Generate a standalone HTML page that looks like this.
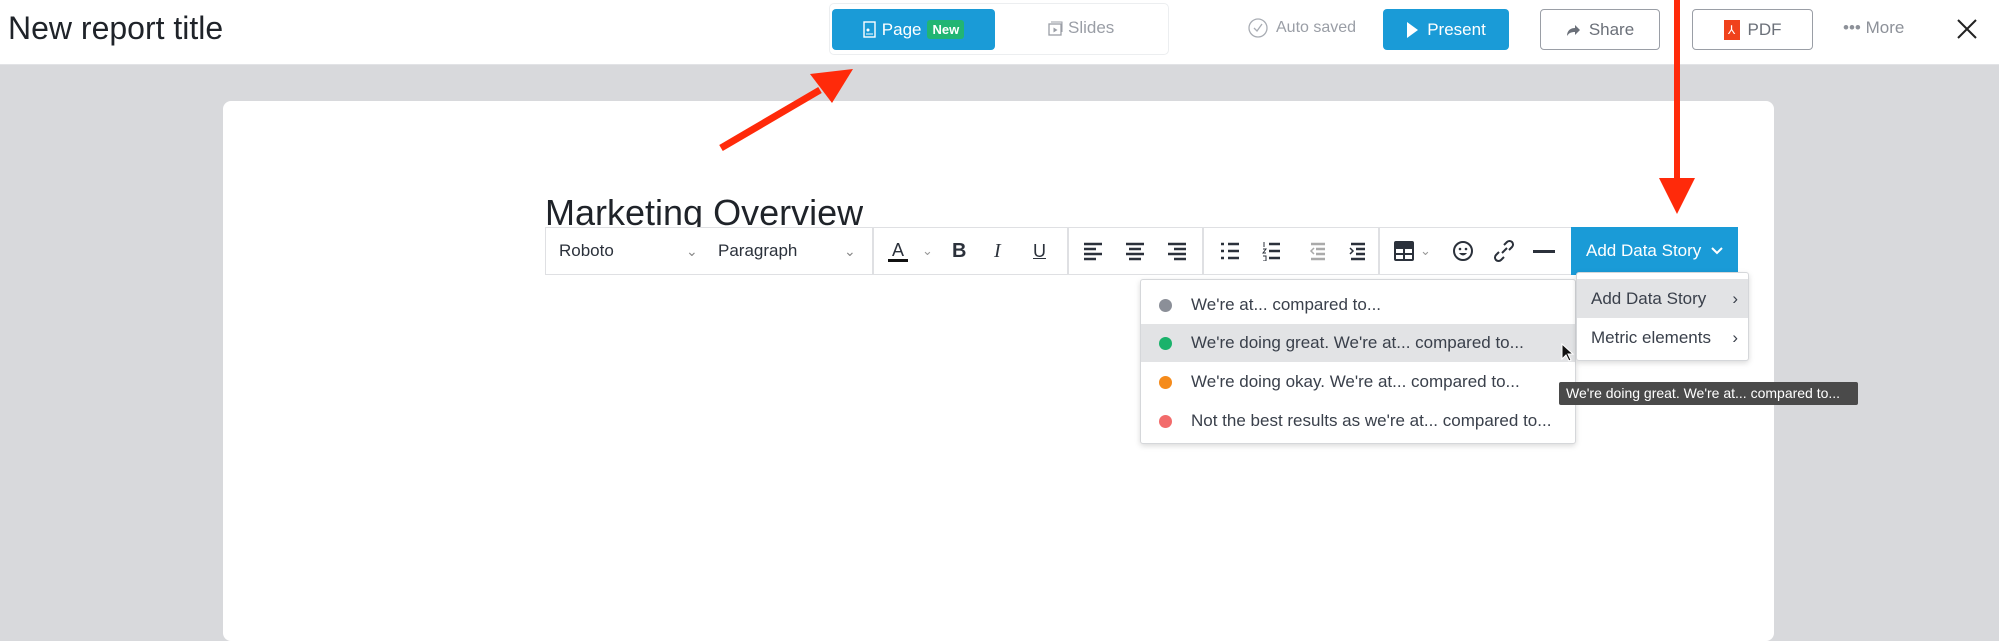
<!DOCTYPE html>
<html><head><meta charset="utf-8"><style>
*{margin:0;padding:0;box-sizing:border-box}
body{width:1999px;height:616px;overflow:hidden;background:#d8d9dc;font-family:"Liberation Sans",sans-serif;position:relative;color:#2b313b}
.a{position:absolute}
.hdr{left:0;top:0;width:1999px;height:65px;background:#fff;border-bottom:1px solid #e2e3e6}
.btn{position:absolute;top:9px;height:41px;border-radius:4px;font-size:17px;display:flex;align-items:center;justify-content:center;gap:8px}
.out{border:1.5px solid #9a9ea6;color:#6b7079;background:#fff}
.card{left:223px;top:101px;width:1551px;height:540px;background:#fff;border-radius:8px}
.tb{left:545px;top:227px;width:1193px;height:48px;border:1.5px solid #dfe0e3;background:#fff}
.dv{position:absolute;top:0;width:1.5px;height:46px;background:#dfe0e3}
.ic{position:absolute;top:0;height:46px;display:flex;align-items:center;justify-content:center;font-size:20px;color:#2b313b}
.menu{background:#fff;border:1px solid #d5d7da;border-radius:3px;box-shadow:0 2px 6px rgba(0,0,0,.15)}
.row{position:absolute;left:0;right:0;height:38px;display:flex;align-items:center;font-size:17px;color:#3a404b}
.dot{width:13px;height:13px;border-radius:50%;margin-left:18px;margin-right:19px}
</style></head><body>
<div class="a hdr"></div>
<div class="a" style="left:8px;top:10px;font-size:32px;color:#1f2329">New report title</div>
<div class="a" style="left:829px;top:3px;width:340px;height:52px;border:1px solid #eceef0;border-radius:5px;background:#fff"></div>
<div class="btn" style="left:832px;width:163px;background:#1a9bd7;color:#fff;gap:6px">
<svg width="13" height="17" viewBox="0 0 13 17"><rect x="1" y="1" width="11" height="15" fill="none" stroke="#fff" stroke-width="1.4"/><circle cx="5" cy="9" r="1.5" fill="#fff"/><path d="M3 13h7" stroke="#fff"/></svg>
<span>Page</span><span style="background:#22b573;font-size:13px;font-weight:bold;padding:2px 5px;border-radius:3px">New</span></div>
<div class="a" style="left:1048px;top:18px;font-size:17px;color:#9a9ea6;display:flex;gap:5px;align-items:center"><svg width="15" height="15" viewBox="0 0 15 15"><rect x="1" y="3" width="12" height="11" fill="none" stroke="#9a9ea6" stroke-width="1.3"/><path d="M3 1h11v10" fill="none" stroke="#9a9ea6"/><path d="M5.5 6.5v5l4-2.5z" fill="#9a9ea6"/></svg>Slides</div>
<div class="a" style="left:1248px;top:18px;font-size:16px;color:#9a9ea6;display:flex;gap:8px;align-items:center"><svg width="20" height="20" viewBox="0 0 20 20"><circle cx="10" cy="10" r="9" fill="none" stroke="#a9adb4" stroke-width="1.3"/><path d="M6 10l3 3 5-7" fill="none" stroke="#a9adb4" stroke-width="1.3"/></svg>Auto saved</div>
<div class="btn" style="left:1383px;width:126px;background:#1a9bd7;color:#fff"><svg width="13" height="18" viewBox="0 0 13 18"><path d="M1 1l11 8-11 8z" fill="#fff"/></svg>Present</div>
<div class="btn out" style="left:1540px;width:120px"><svg width="15" height="15" viewBox="0 0 15 15"><path d="M1 14c0-6 4-8 8-8V3l5 5-5 5V10c-4 0-6 1-8 4z" fill="#6b7079"/></svg>Share</div>
<div class="btn out" style="left:1692px;width:121px"><span style="display:inline-block;width:16px;height:20px;background:#f0421c;color:#fff;font-size:12px;text-align:center;line-height:20px">⅄</span>PDF</div>
<div class="a" style="left:1843px;top:18px;font-size:17px;color:#8d9199">••• More</div>
<svg class="a" style="left:1956px;top:18px" width="22" height="22" viewBox="0 0 22 22"><path d="M2 2l18 18M20 2L2 20" stroke="#222" stroke-width="2"/></svg>
<div class="a card"></div>
<div class="a" style="left:545px;top:192px;font-size:36px;color:#1f2329;height:35px;overflow:hidden;line-height:42px">Marketing Overview</div>
<div class="a tb">
<div class="ic" style="left:13px;font-size:17px">Roboto</div>
<div class="ic" style="left:140px;font-size:14px;color:#888">&#8964;</div>
<div class="ic" style="left:172px;font-size:17px">Paragraph</div>
<div class="ic" style="left:298px;font-size:14px;color:#888">&#8964;</div>
<div class="dv" style="left:326px"></div>
<div class="ic" style="left:342px;font-size:18px;flex-direction:column"><span style="line-height:18px">A</span><span style="width:20px;height:3px;background:#111"></span></div>
<div class="ic" style="left:376px;font-size:13px;color:#999">&#8964;</div>
<div class="ic" style="left:406px;font-weight:bold">B</div>
<div class="ic" style="left:448px;font-style:italic;font-family:'Liberation Serif',serif">I</div>
<div class="ic" style="left:487px;text-decoration:underline;font-size:18px">U</div>
<div class="dv" style="left:521px"></div>
<svg class="a" style="left:538px;top:13px" width="150" height="20" viewBox="0 0 150 20"><g stroke="#2b313b" stroke-width="2.4"><path d="M0 3h18M0 8h12M0 13h18M0 18h12"/><path d="M42 3h18M45 8h12M42 13h18M45 18h12"/><path d="M84 3h18M90 8h12M84 13h18M90 18h12"/></g></svg>
<div class="dv" style="left:656px"></div>
<svg class="a" style="left:675px;top:13px" width="150" height="20" viewBox="0 0 150 20"><g stroke="#2b313b" stroke-width="2.4"><path d="M0 3h3M7 3h11M0 10h3M7 10h11M0 17h3M7 17h11"/><path d="M48 3h11M48 10h11M48 17h11"/><path d="M90 3h14M95 8h9M95 13h9M90 18h14" stroke="#aaa"/><path d="M130 3h14M135 8h9M135 13h9M130 18h14"/></g><path d="M43 1v5M42 8h3l-3 4h3M42 15h3v5h-3" stroke="#2b313b" stroke-width="1" fill="none"/><path d="M93 7l-3 3 3 3" stroke="#aaa" fill="none" stroke-width="1.5"/><path d="M129 7l3 3-3 3" stroke="#2b313b" fill="none" stroke-width="1.5"/></svg>
<div class="dv" style="left:832px"></div>
<svg class="a" style="left:847px;top:12px" width="22" height="22" viewBox="0 0 22 22"><rect x="1" y="1" width="20" height="20" rx="2" fill="#2b313b"/><path d="M3 9h16v10h-16z" fill="#fff"/><path d="M11 9v10M3 14h16" stroke="#2b313b" stroke-width="2"/></svg>
<div class="ic" style="left:874px;font-size:13px;color:#999">&#8964;</div>
<svg class="a" style="left:906px;top:12px" width="22" height="22" viewBox="0 0 22 22"><circle cx="11" cy="11" r="9" fill="none" stroke="#2b313b" stroke-width="2"/><circle cx="8" cy="9" r="1.3" fill="#2b313b"/><circle cx="14" cy="9" r="1.3" fill="#2b313b"/><path d="M7 13q4 5 8 0z" fill="#2b313b"/></svg>
<svg class="a" style="left:947px;top:11px" width="22" height="24" viewBox="0 0 22 24"><path d="M9 14l5-5M11 6l3-3a3 3 0 015 5l-3 3M11 18l-3 3a3 3 0 01-5-5l3-3" stroke="#2b313b" stroke-width="2" fill="none"/></svg>
<div class="a" style="left:987px;top:22px;width:22px;height:2.5px;background:#2b313b"></div>
<div class="a" style="left:1025px;top:-1.5px;width:167px;height:48px;background:#1a9bd7;color:#fff;font-size:17px;display:flex;align-items:center;padding-left:15px;gap:10px">Add Data Story <svg width="12" height="8" viewBox="0 0 12 8"><path d="M1 1l5 5 5-5" stroke="#fff" stroke-width="2" fill="none"/></svg></div>
</div>
<div class="a menu" style="left:1140px;top:279px;width:436px;height:165px">
<div class="row" style="top:6px"><span class="dot" style="background:#8b8f98"></span>We're at... compared to...</div>
<div class="row" style="top:44px;background:#e2e3e5"><span class="dot" style="background:#1ab26b"></span>We're doing great. We're at... compared to...</div>
<div class="row" style="top:83px"><span class="dot" style="background:#f58b1b"></span>We're doing okay. We're at... compared to...</div>
<div class="row" style="top:122px"><span class="dot" style="background:#f26b6b"></span>Not the best results as we're at... compared to...</div>
</div>
<div class="a menu" style="left:1576px;top:272px;width:173px;height:89px">
<div class="row" style="top:6px;height:39px;background:#e2e3e5;padding-left:14px">Add Data Story<span style="position:absolute;right:10px">&#8250;</span></div>
<div class="row" style="top:46px;padding-left:14px">Metric elements<span style="position:absolute;right:10px">&#8250;</span></div>
</div>
<svg class="a" style="left:1561px;top:343px" width="14" height="20" viewBox="0 0 14 20"><path d="M1 1v15l4-4 3 6 2-1-3-6h5z" fill="#111" stroke="#fff"/></svg>
<div class="a" style="left:1559px;top:382px;width:299px;height:23px;background:#4a4a4a;color:#fff;font-size:14px;line-height:23px;padding-left:7px;border-radius:2px;white-space:nowrap">We're doing great. We're at... compared to...</div>
<svg class="a" style="left:0;top:0" width="1999" height="616" viewBox="0 0 1999 616"><path d="M721 148L820 90" stroke="#ff2a0a" stroke-width="7"/><path d="M853 69L810 74L832 103z" fill="#ff2a0a"/><path d="M1677 0V185" stroke="#ff2a0a" stroke-width="6"/><path d="M1659 178h36l-18 36z" fill="#ff2a0a"/></svg>
</body></html>
